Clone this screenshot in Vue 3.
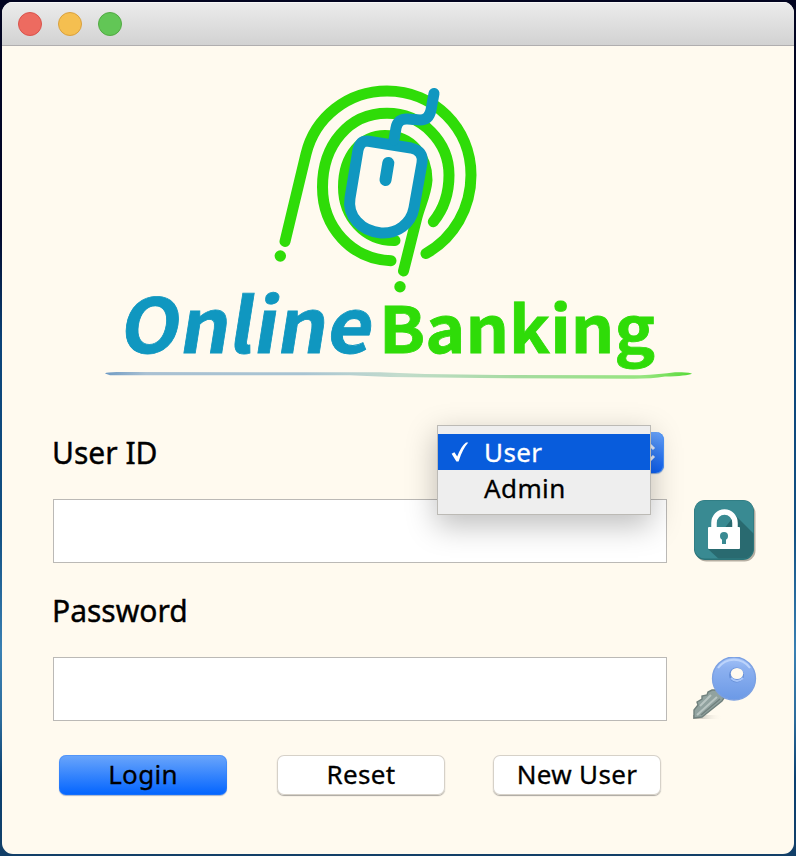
<script setup>
import { ref } from 'vue'

const roles = ['User', 'Admin']
const role = ref('User')
const userId = ref('')
const password = ref('')
</script>

<template>
  <div class="desktop">
    <main class="window">
      <header class="titlebar">
        <span class="light close"></span>
        <span class="light minimize"></span>
        <span class="light zoom"></span>
      </header>

      <svg class="logo" viewBox="2 46 792 354" width="792" height="354">
        <defs>
          <linearGradient id="rule" gradientUnits="userSpaceOnUse" x1="105" y1="0" x2="692" y2="0">
            <stop offset="0" stop-color="#6f9bc4" />
            <stop offset=".07" stop-color="#a9c0d2" />
            <stop offset=".34" stop-color="#a9c4d2" />
            <stop offset=".5" stop-color="#c3dccd" />
            <stop offset=".7" stop-color="#a5dba0" />
            <stop offset=".92" stop-color="#96e57e" />
            <stop offset="1" stop-color="#55d936" />
          </linearGradient>
        </defs>
        <g class="stroke green">
          <path d="M285 241.5 L306 154 C315 117 348 91 387 91 C434 91 471 128 471 175 C471 208 454 238 426 253.500" />
          <path d="M391 260.7 C351 259 322.500 227 322.500 187 C322.500 145 349 113.3 387 113.3 C422 113.3 449 142 449 175 C449 194 443 210 433.3 221.7" />
          <path d="M395 240.5 C364 241 343.500 216 343.500 187 C343.500 155 362 135.500 385 135.500 C412 135.500 427 157 427 180 C426 194 420 205 417 217 L403.5 271" />
        </g>
        <circle class="fill-green" cx="280.3" cy="256" r="5.7" />
        <circle class="fill-green" cx="400" cy="286.7" r="5.7" />
        <g class="stroke blue">
          <path class="body" d="M367 141 L411 148 Q424 151 422 163 L414 208 C411 224 397 234 381 233 C361 231 347 216 350 198 L358 150 Q360 141 367 141Z" />
          <path d="M388.3 163 L385.5 180" stroke-width="12" />
          <path d="M394 140 L396 128 Q398 118 408 119 L420 120 Q429 120 431 110 L434 93.5" />
        </g>
        <text class="word online" transform="translate(118 353) skewX(-9)" x="0" y="0" textLength="252" lengthAdjust="spacingAndGlyphs">Online</text>
        <text class="word banking" x="379" y="353" textLength="276" lengthAdjust="spacingAndGlyphs">Banking</text>
        <path d="M105 373.5 Q107 371.7 120 372 L380 372.3 L425 374 L500 375 L640 375.2 Q660 374.5 675 372.3 Q690 371.6 692 373.7 Q687 376 665 376.5 Q650 379 630 378.7 L480 378 L390 377 L350 375.3 L110 375.2Z" fill="url(#rule)" />
      </svg>

      <form class="form" @submit.prevent>
        <div class="label-row">
          <label class="label" for="uid">User ID</label>
          <div class="combo">
            <svg class="arrows" viewBox="0 0 30 41" width="30" height="41">
              <path d="M10 17 L15 12 L20 17 M10 24 L15 29 L20 24" />
            </svg>
            <ul class="menu">
              <li v-for="r in roles" :key="r" class="option" :class="{ selected: r === role }" @click="role = r">
                <span class="tick">
                  <svg v-if="r === role" viewBox="0 0 18 20" width="18" height="20">
                    <path d="M0.6 11.8 L3.4 10.2 L6.2 14.6 Q10 4.5 15 0.6 L17.3 0.6 Q11.5 7 7.6 19.4 L5.4 19.4Z" />
                  </svg>
                </span>
                <span>{{ r }}</span>
              </li>
            </ul>
          </div>
        </div>

        <div class="field-row">
          <input id="uid" v-model="userId" class="field" type="text" />
          <svg class="icon" viewBox="0 0 64 64" width="64" height="64">
            <defs>
              <clipPath id="tile"><rect x="1.5" y="1.5" width="59" height="58" rx="10" /></clipPath>
            </defs>
            <rect x="2.5" y="3.5" width="60" height="59" rx="11" fill="#b5aea2" />
            <rect x="1" y="1" width="60" height="60" rx="11" fill="#2a7378" />
            <g clip-path="url(#tile)">
              <rect width="62" height="61" fill="#398a92" />
              <path d="M42 16 L62 36 V62 H28 L15 50Z" fill="#296a70" />
            </g>
            <path d="M21 30 V24 A10.5 11 0 0 1 42 24 V30" fill="none" stroke="#fff" stroke-width="5.5" />
            <rect x="15" y="28" width="32" height="22" rx="1" fill="#fff" />
            <circle cx="31" cy="37" r="4" fill="#398a92" />
            <rect x="29" y="38" width="4" height="7" fill="#398a92" />
          </svg>
        </div>

        <label class="label second" for="pwd">Password</label>

        <div class="field-row">
          <input id="pwd" v-model="password" class="field" type="password" />
          <svg class="icon" viewBox="0 1 64 64" width="64" height="64">
            <defs>
              <linearGradient id="head" x1="0" y1="0" x2="0" y2="1">
                <stop offset="0" stop-color="#a3c2f7" />
                <stop offset=".25" stop-color="#8db1f0" />
                <stop offset="1" stop-color="#6b99e6" />
              </linearGradient>
              <linearGradient id="haze"><stop offset="0" stop-color="#aaa59c" /><stop offset="1" stop-color="#fffaef" stop-opacity="0" /></linearGradient>
            </defs>
            <rect x="0" y="59" width="29" height="4" fill="url(#haze)" />
            <path d="M19 34 L23 34 L31 42 L29 45 L9 61 L1 62 L1 54 L5 49 L4 46 L9 43 L9 40 L14 39 L15 36Z" fill="#91a29f" stroke="#70807d" stroke-width="1.4" />
            <path d="M24 41 L4 59 M18 39 L7 50" stroke="#b9c5c2" stroke-width="2" fill="none" />
            <path d="M27 43 L8 59" stroke="#71817e" stroke-width="1.5" fill="none" />
            <circle cx="41" cy="22.5" r="21.5" fill="url(#head)" stroke="#7ba0e2" stroke-width="1.3" />
            <path d="M25 12 A19.5 19.5 0 0 1 57 12" fill="none" stroke="#bdd4fb" stroke-width="2" />
            <ellipse cx="43.500" cy="19" rx="7.5" ry="7.5" fill="#668fd7" />
            <ellipse cx="44" cy="17.500" rx="6.200" ry="5.5" fill="#fffaef" />
            <path d="M38 22 Q44 28 50 22" fill="none" stroke="#a7c5f9" stroke-width="2" />
          </svg>
        </div>

        <div class="actions">
          <button class="btn primary" type="submit">Login</button>
          <button class="btn" type="reset">Reset</button>
          <button class="btn last" type="button">New User</button>
        </div>
      </form>
    </main>
  </div>
</template>

<style>
body {
  margin: 0;
  overflow: hidden;
}
</style>

<style scoped>
.desktop {
  box-sizing: border-box;
  width: 796px;
  height: 856px;
  padding: 2px;
  background: linear-gradient(180deg, #020420 0%, #02082c 27%, #0b4379 40%, #125083 62%, #3a80b3 76%, #2d6c9c 84%, #0b4071 91%, #123f68 100%);
  font-family: "Noto Sans", "Open Sans", sans-serif;
  color: #000;
}
.window {
  display: flex;
  flex-direction: column;
  width: 792px;
  height: 852px;
  border-radius: 11px;
  background: #fffaef;
  overflow: hidden;
}
.titlebar {
  box-sizing: border-box;
  display: flex;
  align-items: center;
  gap: 16px;
  height: 44px;
  padding: 0 16px;
  flex: none;
  background: linear-gradient(#ececec, #d2d2d2);
  border-bottom: 1px solid #b0aeaf;
  box-shadow: inset 0 1px #f7f7f7;
}
.light {
  box-sizing: border-box;
  width: 24px;
  height: 24px;
  border-radius: 50%;
  border: 1px solid;
}
.close { background: #ed6b60; border-color: #d9534c; }
.minimize { background: #f5bf50; border-color: #d9a03e; }
.zoom { background: #62c656; border-color: #52a943; }
.logo { display: block; flex: none; }
.stroke { fill: none; stroke-width: 11; stroke-linecap: round; stroke-linejoin: round; }
.green { stroke: #2fdc08; }
.blue { stroke: #1097c0; }
.blue .body { fill: #fffaef; }
.fill-green { fill: #2fdc08; }
.word { font-family: "Noto Sans CJK JP", sans-serif; font-weight: 700; stroke-width: 0.8; }
.online { font-size: 75px; fill: #1097c0; stroke: #1097c0; }
.banking { font-size: 64px; fill: #2fdc08; stroke: #2fdc08; }
.form {
  display: flex;
  flex-direction: column;
  padding: 32px 36px 0 51px;
}
.label-row {
  display: flex;
  justify-content: space-between;
  width: 611px;
  height: 67px;
}
.label {
  margin-left: -1px;
  font-size: 30px;
  line-height: 42px;
  letter-spacing: 0;
  -webkit-text-stroke: 0.4px #000;
}
.second { height: 67px; padding-top: 27px; }
.combo {
  position: relative;
  display: flex;
  justify-content: flex-end;
  width: 224px;
  height: 41px;
}
.arrows {
  border-radius: 0 8px 8px 0;
  background: linear-gradient(#68a3fb, #0b61f6);
  box-shadow: inset -1px 0 #4d95f8, 0 1px 1px #8aa8d4;
  fill: none;
  stroke: #e8eefb;
  stroke-width: 3;
}
.menu {
  position: absolute;
  top: -6px;
  left: -2px;
  box-sizing: border-box;
  width: 212px;
  height: 88px;
  margin: 0;
  padding: 8px 0;
  list-style: none;
  background: #eee;
  box-shadow: 0 0 0 1px #bcbab5, 0 10px 28px 2px rgba(0, 0, 0, 0.25);
}
.option {
  display: flex;
  align-items: center;
  height: 36px;
  font-size: 26px;
  line-height: 36px;
  letter-spacing: 0.4px;
  -webkit-text-stroke: 0.3px currentColor;
}
.selected { background: #085cdc; color: #fff; }
.tick { display: flex; width: 33px; padding-left: 13px; fill: currentColor; }
.field-row {
  display: flex;
  align-items: flex-start;
  gap: 26px;
  height: 64px;
}
.field {
  box-sizing: border-box;
  width: 614px;
  height: 64px;
  margin: 0;
  padding: 0 12px;
  border: 1px solid #bbb9b6;
  border-radius: 0;
  background: #fff;
  font: inherit;
  font-size: 28px;
  outline: none;
}
.icon { flex: none; }
.actions {
  display: flex;
  gap: 50px;
  padding: 34px 0 0 6px;
}
.btn {
  width: 168px;
  height: 40px;
  margin: 0;
  padding: 0 0 2px;
  border: 0;
  border-radius: 7px;
  background: #fff;
  box-shadow: inset 0 0 0 1px #d6d1c8, 0 1px 1px #aaa69f;
  font-family: inherit;
  font-size: 26px;
  line-height: 38px;
  letter-spacing: 0.3px;
  color: #000;
  -webkit-text-stroke: 0.3px #000;
}
.primary {
  background: linear-gradient(#6ba6fb, #0264ff);
  box-shadow: inset 0 0 0 1px #2f80f866, 0 1px 1px #a8b4cc;
}
.last { margin-left: -2px; }
</style>
